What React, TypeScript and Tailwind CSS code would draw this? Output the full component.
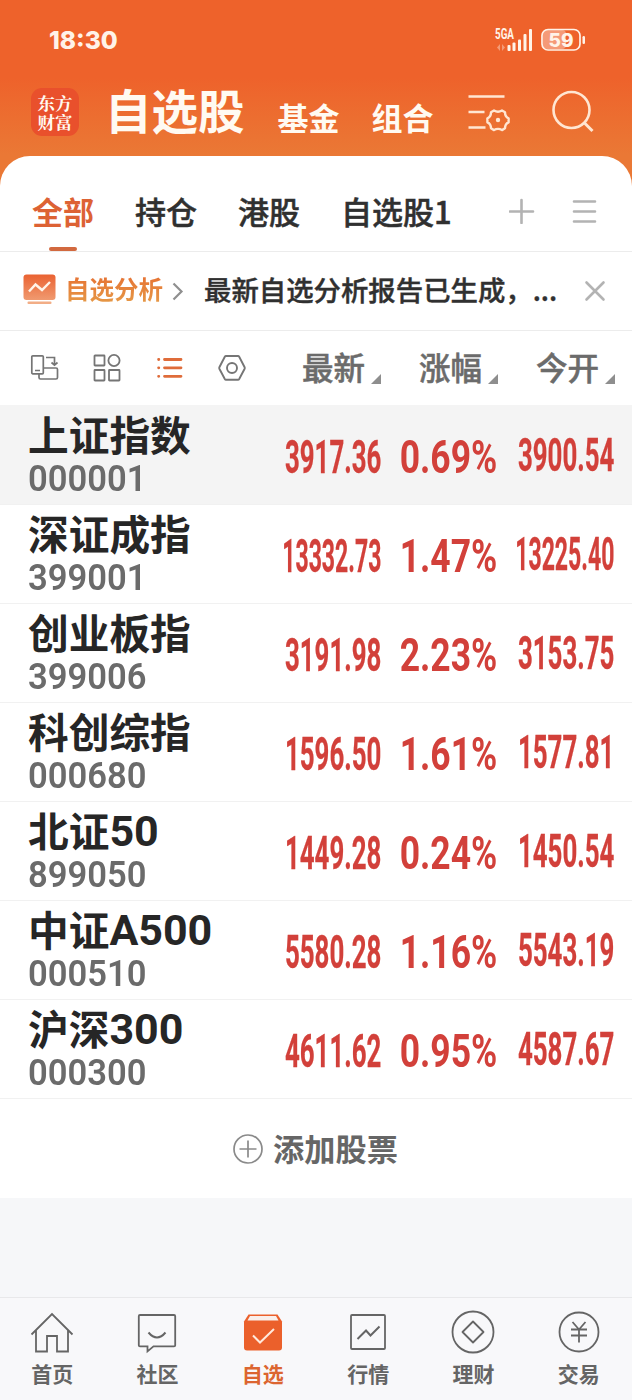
import type { ReactNode } from "react";
import clsx from "clsx";

type Quote = {
  name: string;
  suffix?: string;
  code: string;
  last: string;
  change: string;
  open: string;
};

const quotes: Quote[] = [
  { name: "上证指数", code: "000001", last: "3917.36", change: "0.69%", open: "3900.54" },
  { name: "深证成指", code: "399001", last: "13332.73", change: "1.47%", open: "13225.40" },
  { name: "创业板指", code: "399006", last: "3191.98", change: "2.23%", open: "3153.75" },
  { name: "科创综指", code: "000680", last: "1596.50", change: "1.61%", open: "1577.81" },
  { name: "北证", suffix: "50", code: "899050", last: "1449.28", change: "0.24%", open: "1450.54" },
  { name: "中证", suffix: "A500", code: "000510", last: "5580.28", change: "1.16%", open: "5543.19" },
  { name: "沪深", suffix: "300", code: "000300", last: "4611.62", change: "0.95%", open: "4587.67" },
];

function StatusBar() {
  return (
    <div className="flex h-[76px] items-center justify-between pt-[3px] pr-[46px] pl-[49px] text-[#fff3e8]">
      <span className="pt-[1px] font-['Inter','Noto_Sans',sans-serif] text-[24.5px] leading-none font-extrabold">18:30</span>
      <div className="flex items-center gap-2">
        <svg className="overflow-visible" width="38" height="24" viewBox="0 0 38 24" fill="currentColor">
          <text x="0" y="11" fontSize="14" fontWeight="700" fontFamily="Roboto, sans-serif" textLength="19" lengthAdjust="spacingAndGlyphs">5GA</text>
          <path d="M2 19.500l3-3.500v7zM10 19.500l-3-3.500v7z" opacity=".4" />
          <rect x="12.500" y="17" width="3" height="6" rx="1" />
          <rect x="17.500" y="14.500" width="3" height="8.500" rx="1" />
          <rect x="23" y="11.500" width="3" height="11.500" rx="1" />
          <rect x="28.500" y="6" width="3" height="17" rx="1" />
          <rect x="34" y="1" width="3" height="22" rx="1" />
        </svg>
        <svg width="45" height="24" viewBox="0 0 45 24">
          <rect x="2" y="2" width="23" height="19" rx="4" fill="#f59a77" />
          <rect x="1" y="1.500" width="38" height="20.500" rx="6" fill="none" stroke="currentColor" strokeWidth="1.700" />
          <rect x="41.500" y="8" width="2.500" height="8" rx="1.200" fill="currentColor" />
          <text x="20" y="18.700" textAnchor="middle" fontSize="19" fontWeight="800" fontFamily="Inter, sans-serif" fill="currentColor">59</text>
        </svg>
      </div>
    </div>
  );
}

function Header() {
  return (
    <div className="flex h-20 items-start pl-[31px] text-[#fffaf2]">
      <div className="mt-3 flex size-12 flex-col items-center justify-center rounded-[11px] bg-[#e9502c] font-['Noto_Serif_CJK_SC','Noto_Sans_CJK_SC',serif] text-[17.500px] leading-[19.500px] font-bold">
        <span>东方</span>
        <span>财富</span>
      </div>
      <h1 className="ml-[26px] text-[46.500px] leading-[65px] font-bold">自选股</h1>
      <span className="ml-[33px] pt-[11px] text-[31px] leading-[60px] font-bold">基金</span>
      <span className="ml-[32px] pt-[11px] text-[31px] leading-[60px] font-bold">组合</span>
      <svg className="mt-[16px] ml-[34px]" width="44" height="44" viewBox="0 0 44 44" fill="none" stroke="#ffe6d2" strokeWidth="2.600">
        <path d="M0.500 4.500h36M0.500 20h16M0.500 35.500h17" />
        <path d="M26 18.500q4 2.500 8 0l3 1.800q0 4.500 3.600 6v4q-3.600 1.500-3.600 6l-3 1.800q-4-2.500-8 0l-3-1.800q0-4.500-3.600-6v-4q3.600-1.500 3.600-6z" strokeWidth="2.400" strokeLinejoin="round" />
        <circle cx="30" cy="28" r="2.200" fill="#ffe6d2" stroke="none" />
      </svg>
      <svg className="mt-[14px] ml-[40px]" width="44" height="44" viewBox="0 0 44 44" fill="none" stroke="#ffe6d2" strokeWidth="2.600">
        <circle cx="19.500" cy="20" r="18" />
        <path d="M32.500 33l8 8" strokeWidth="3" />
      </svg>
    </div>
  );
}

function Tabs() {
  return (
    <div className="flex h-24 items-start border-b border-[#ececec] pl-8 text-[31px] leading-[109px] font-medium text-[#303030] [-webkit-text-stroke:0.5px]">
      <div className="relative font-bold text-[#dd6234] [-webkit-text-stroke:0]">
        全部
        <span className="absolute top-[91px] left-[17px] h-1 w-7 rounded-full bg-[#d2693f]" />
      </div>
      <span className="ml-[41px]">持仓</span>
      <span className="ml-[41px]">港股</span>
      <span className="ml-[41px]">自选股1</span>
      <svg className="mt-[42px] ml-auto" width="26" height="26" viewBox="0 0 26 26" stroke="#b3b3b3" strokeWidth="2.600" strokeLinecap="round">
        <path d="M12.500 2v23M1 13.500h23" />
      </svg>
      <svg className="mt-[42px] mr-[35px] ml-[37px]" width="25" height="26" viewBox="0 0 25 26" stroke="#b3b3b3" strokeWidth="2.600" strokeLinecap="round">
        <path d="M2 3.500h21M2 13.500h21M2 23.500h21" />
      </svg>
    </div>
  );
}

function Notice() {
  return (
    <div className="flex h-[79px] items-center border-b border-[#ececec] pl-[23px]">
      <svg className="-mt-[4px]" width="33" height="31" viewBox="0 0 33 31">
        <defs>
          <linearGradient id="screen" x1="0" y1="0" x2="0" y2="1">
            <stop offset="0" stopColor="#ea6232" />
            <stop offset="1" stopColor="#f09a70" />
          </linearGradient>
        </defs>
        <rect x="0.500" y="0.500" width="32" height="25.500" rx="3" fill="url(#screen)" />
        <rect x="4.500" y="27.500" width="24" height="2.500" rx="1" fill="#f2ad86" />
        <path d="M6 17.500l6.500-7 6.500 5.500 8-8" fill="none" stroke="#fff4ea" strokeWidth="2.400" />
      </svg>
      <span className="-mt-[4px] ml-[9px] bg-gradient-to-b from-[#e5682f] to-[#e5a04a] bg-clip-text text-[24.500px] leading-[40px] font-bold text-transparent">
        自选分析
      </span>
      <svg className="ml-[8px]" width="13" height="20" viewBox="0 0 13 20" fill="none" stroke="#8f8f8f" strokeWidth="2.200">
        <path d="M2.500 2.500l8 8-8 8" />
      </svg>
      <span className="-mt-[2px] ml-[20px] w-[357px] text-[27.400px] font-medium whitespace-nowrap text-[#303030] [-webkit-text-stroke:0.4px]">
        最新自选分析报告已生成，...
      </span>
      <svg className="ml-[23px]" width="22" height="22" viewBox="0 0 22 22" stroke="#b3b3b3" strokeWidth="2.600" strokeLinecap="round">
        <path d="M2.500 2.500l17 17M19.500 2.500l-17 17" />
      </svg>
    </div>
  );
}

function ColumnLabel({ children, className }: { children: ReactNode; className?: string }) {
  return (
    <div className={clsx("flex items-end", className)}>
      <span className="h-[74px] text-[31.500px] leading-[70px] font-medium text-[#6b6b6b] [-webkit-text-stroke:0.5px]">{children}</span>
      <svg className="mb-[21px] ml-[5px]" width="11" height="10" viewBox="0 0 11 10" fill="#8e8e8e">
        <path d="M11 0v10H1z" />
      </svg>
    </div>
  );
}

function Toolbar() {
  return (
    <div className="flex h-[74px] items-center pl-[30px]">
      <svg width="29" height="28" viewBox="0 0 29 28" fill="none" stroke="#757575" strokeWidth="1.700">
        <rect x="1.800" y="1.800" width="11.500" height="18" rx="1" />
        <path d="M5 16.500h5M16 3.500h8.500v7.500M21.500 8.500l3 2.700 3-2.700M9 20v3.500q0 1.500 1.500 1.500h15.500q1.500 0 1.500-1.500v-8q0-1.500-1.500-1.500h-12" />
      </svg>
      <svg className="ml-[34px]" width="28" height="28" viewBox="0 0 28 28" fill="none" stroke="#757575" strokeWidth="1.800">
        <rect x="1.500" y="1.500" width="10" height="10" rx=".5" />
        <circle cx="21" cy="6.500" r="5.600" />
        <rect x="1.500" y="16" width="10" height="10.500" rx=".5" />
        <rect x="16" y="16" width="10.500" height="10.500" rx=".5" />
      </svg>
      <svg className="ml-[36px]" width="26" height="28" viewBox="0 0 26 28" stroke="#df6c3a" strokeWidth="2.800" strokeLinecap="round">
        <path d="M1.600 5.500h.2M1.600 13.800h.2M1.600 22.300h.2M7.500 5.500h16.500M7.500 13.800h16.500M7.500 22.300h16.500" />
      </svg>
      <svg className="ml-[35px]" width="28" height="28" viewBox="0 0 28 28" fill="none" stroke="#757575" strokeWidth="1.900">
        <path d="M8 2h12q.8 0 1.200.7l5.300 10.300q.5 1 0 2l-5.300 10q-.4.700-1.200.7H8q-.8 0-1.200-.7L1.500 15q-.5-1 0-2L6.800 2.700Q7.200 2 8 2z" />
        <circle cx="14" cy="14" r="5" />
      </svg>
      <ColumnLabel className="ml-[56px]">最新</ColumnLabel>
      <ColumnLabel className="ml-[38px]">涨幅</ColumnLabel>
      <ColumnLabel className="ml-[38px]">今开</ColumnLabel>
    </div>
  );
}

function Price({ value }: { value: string }) {
  return (
    <span
      className={clsx(
        "origin-right text-[47px] leading-none font-bold whitespace-nowrap [-webkit-text-stroke:0.3px]",
        value.length > 7 ? "scale-x-[.49]" : "scale-x-[.55]",
      )}
    >
      {value}
    </span>
  );
}

function QuoteRow({ quote, active }: { quote: Quote; active: boolean }) {
  return (
    <div className={clsx("flex border-b border-[#f1f1f1] pl-7", active ? "h-[100px] bg-[#f4f4f4] pt-px" : "h-[99px]")}>
      <div className="w-[252px] shrink-0">
        <p className="flex h-[57px] text-[40.700px] leading-[56px] font-bold whitespace-nowrap text-[#262626]">
          {quote.name}
          {quote.suffix && <span className="font-['Roboto',sans-serif] text-[43px] leading-[58px]">{quote.suffix}</span>}
        </p>
        <p className="w-fit origin-left scale-x-[.96] font-['Roboto',sans-serif] text-[36px] leading-[32px] font-semibold text-[#6b6b6b]">
          {quote.code}
        </p>
      </div>
      <div className="flex font-['Roboto',sans-serif] text-[#d2403a]">
        <div className="flex w-[101px] items-center justify-end pt-[2px]">
          <Price value={quote.last} />
        </div>
        <div className="flex w-[116px] items-center justify-end pt-[2px]">
          <span className="origin-right scale-x-[.755] text-[47px] leading-none font-bold">{quote.change}</span>
        </div>
        <div className="flex w-[117px] items-center justify-end pb-[2px]">
          <Price value={quote.open} />
        </div>
      </div>
    </div>
  );
}

function NavItem({ label, active, children }: { label: string; active?: boolean; children: ReactNode }) {
  return (
    <div className={clsx("flex flex-1 flex-col items-center", active ? "text-[#dc6530]" : "text-[#656565]")}>
      <svg className="mt-3 -ml-[1px]" width="44" height="44" viewBox="0 0 44 44" fill="none" stroke="currentColor" strokeWidth="1.800">
        {children}
      </svg>
      <span className="mt-[4px] -ml-[1px] text-[21px] leading-[30px] font-bold">{label}</span>
    </div>
  );
}

function BottomNav() {
  return (
    <nav className="flex h-[103px] border-t border-[#e8e8ea] bg-[#f8f8fa]">
      <NavItem label="首页">
        <path d="M1.500 24.500L22 4l20.500 20.500M6 20.500v21h11v-15.500h10v15.500h11v-21" />
      </NavItem>
      <NavItem label="社区">
        <path d="M5 5h34q1.200 0 1.200 1.200v29q0 1.200-1.200 1.200H18.500l-6 5v-5H5q-1.200 0-1.200-1.200V6.200Q3.800 5 5 5z" />
        <path d="M13.500 22.500q8.500 10 17 0" strokeWidth="2" />
      </NavItem>
      <NavItem label="自选" active>
        <path d="M7.500 4.500h29l4.500 7v26q0 3-3 3h-32q-3 0-3-3v-26z" fill="#eb602b" stroke="none" />
        <path d="M9 6h26l2.500 4.500h-31z" fill="#f9efeb" stroke="none" />
        <path d="M12 25.500l7 7L33 19" stroke="#ffe9dc" strokeWidth="2" />
      </NavItem>
      <NavItem label="行情">
        <rect x="5" y="5" width="34" height="34" rx="1" />
        <path d="M11.500 29l8.500-8.500 4.500 5L33.500 16.500" strokeWidth="2" />
      </NavItem>
      <NavItem label="理财">
        <circle cx="22" cy="22" r="20.500" />
        <path d="M22 11.500L32.500 22 22 32.500 11.500 22z" strokeLinejoin="round" />
      </NavItem>
      <NavItem label="交易">
        <circle cx="22" cy="22" r="19.500" />
        <path d="M15.500 12l6.500 7.500 6.500-7.500M14 19.500h16M14 25.500h16M22 19.500V32.500" />
      </NavItem>
    </nav>
  );
}

export default function App() {
  return (
    <div className="flex h-[1400px] w-[632px] flex-col overflow-hidden bg-[#f6f7f9] font-['Noto_Sans_CJK_SC',sans-serif]">
      <div className="bg-linear-to-b from-[#ee622b] from-[78px] to-[#ea7835] to-[155px]">
        <StatusBar />
        <Header />
        <div className="rounded-t-[30px] bg-white">
          <Tabs />
        </div>
      </div>
      <div className="bg-white">
        <Notice />
        <Toolbar />
        {quotes.map((q, i) => (
          <QuoteRow key={q.code} quote={q} active={i === 0} />
        ))}
        <button className="flex h-[99px] w-full items-center justify-center text-[31.200px] font-bold text-[#666]">
          <svg className="mr-[10px] -ml-[1px]" width="30" height="30" viewBox="0 0 30 30" fill="none" stroke="#8a8a8a" strokeWidth="1.700">
            <circle cx="15" cy="15" r="14" />
            <path d="M15 6.500v17M6.500 15h17" />
          </svg>
          添加股票
        </button>
      </div>
      <div className="flex-1" />
      <BottomNav />
    </div>
  );
}
